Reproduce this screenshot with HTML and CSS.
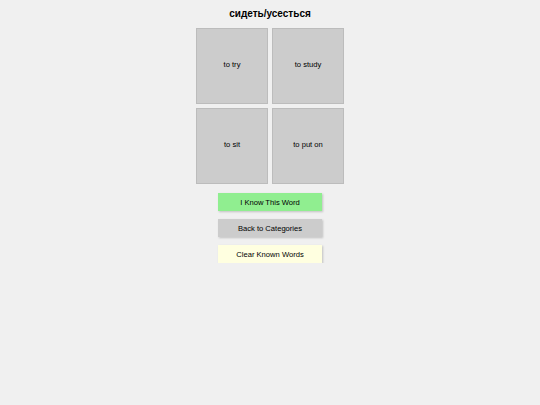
FILE: index.html
```html
<!DOCTYPE html>
<html>
<head>
<meta charset="utf-8">
<link rel="stylesheet" href="styles.css">
</head>
<body>
<div class="app">
  <h1 class="title">сидеть/усесться</h1>
  <div class="grid">
    <div class="tile">to try</div>
    <div class="tile">to study</div>
    <div class="tile">to sit</div>
    <div class="tile">to put on</div>
  </div>
  <div class="actions">
    <button class="btn btn-know">I Know This Word</button>
    <button class="btn btn-back">Back to Categories</button>
    <button class="btn btn-clear">Clear Known Words</button>
  </div>
</div>
</body>
</html>
```

FILE: styles.css
```css
html, body {
  margin: 0;
  padding: 0;
  background: #f0f0f0;
  font-family: "Liberation Sans", Arial, sans-serif;
  color: #000;
}
.app {
  display: flex;
  flex-direction: column;
  align-items: center;
  padding-top: 7px;
}
.title {
  margin: 0;
  font-size: 10px;
  font-weight: bold;
  line-height: 14px;
  height: 14px;
}
.grid {
  margin-top: 7px;
  display: grid;
  grid-template-columns: 72px 72px;
  grid-auto-rows: 76px;
  gap: 4px;
}
.tile {
  box-sizing: border-box;
  background: #cccccc;
  border: 1px solid #bcbcbc;
  display: flex;
  align-items: center;
  justify-content: center;
  padding-bottom: 4px;
  font-size: 7.6px;
}
.actions {
  margin-top: 9px;
  display: flex;
  flex-direction: column;
  align-items: center;
  gap: 8px;
}
.btn {
  box-sizing: border-box;
  width: 104px;
  height: 18px;
  border: none;
  padding: 0;
  font-family: "Liberation Sans", Arial, sans-serif;
  font-size: 7.6px;
  color: #000;
  box-shadow: 1px 1px 2px rgba(0,0,0,0.2);
}
.btn-know { background: #90ee90; }
.btn-back { background: #cccccc; }
.btn-clear { background: #ffffe0; }
```
